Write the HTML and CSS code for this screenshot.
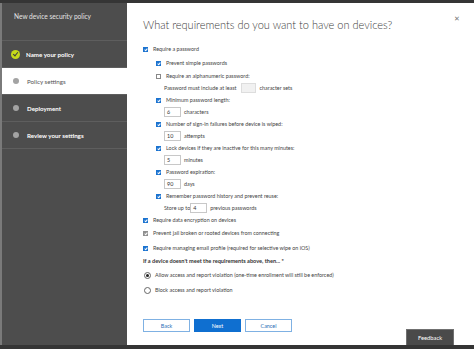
FILE: index.html
```html
<!DOCTYPE html>
<html lang="en">
<head>
    <meta charset="UTF-8" />
    <title>New device security policy</title>
    <link rel="stylesheet" href="styles.css">
</head>
<body>
    <div class="shell">
        <!-- Pasos del asistente -->
        <div class="sidebar">
            <div class="wizard-title">New device security policy</div>
            <div class="step done"><span class="dot"></span>Name your policy</div>
            <div class="step current"><span class="dot"></span>Policy settings</div>
            <div class="step"><span class="dot"></span>Deployment</div>
            <div class="step"><span class="dot"></span>Review your settings</div>
        </div>

        <div class="main">
            <div class="header">
                <h1>What requirements do you want to have on devices?</h1>
                <span class="close">&#x2715;</span>
            </div>

            <div class="form">
                <div class="row"><span class="cb on"></span>Require a password</div>
                <div class="sub">
                    <div class="row"><span class="cb on"></span>Prevent simple passwords</div>
                    <div class="row gap"><span class="cb"></span>Require an alphanumeric password:</div>
                    <div class="row field">Password must include at least <span class="box wide"></span> character sets</div>
                    <div class="row"><span class="cb on"></span>Minimum password length:</div>
                    <div class="row field"><span class="box">6</span> characters</div>
                    <div class="row"><span class="cb on"></span>Number of sign-in failures before device is wiped:</div>
                    <div class="row field"><span class="box">10</span> attempts</div>
                    <div class="row"><span class="cb on"></span>Lock devices if they are inactive for this many minutes:</div>
                    <div class="row field"><span class="box">5</span> minutes</div>
                    <div class="row"><span class="cb on"></span>Password expiration:</div>
                    <div class="row field"><span class="box">90</span> days</div>
                    <div class="row"><span class="cb on"></span>Remember password history and prevent reuse:</div>
                    <div class="row field">Store up to <span class="box">4</span> previous passwords</div>
                </div>
                <div class="row"><span class="cb on"></span>Require data encryption on devices</div>
                <div class="row top"><span class="cb dis"></span>Prevent jail broken or rooted devices from connecting</div>
                <div class="row top2"><span class="cb on"></span>Require managing email profile (required for selective wipe on iOS)</div>
                <div class="row question">If a device doesn't meet the requirements above, then... *</div>
                <div class="row radio-row"><span class="radio on"></span>Allow access and report violation (one-time enrollment will still be enforced)</div>
                <div class="row radio-row"><span class="radio"></span>Block access and report violation</div>
            </div>

            <div class="buttons">
                <button class="btn">Back</button>
                <button class="btn primary">Next</button>
                <button class="btn">Cancel</button>
            </div>

            <button class="feedback">Feedback</button>
        </div>
    </div>
</body>
</html>
```

FILE: styles.css
```css
body {
    margin: 0;
    width: 474px;
    height: 349px;
    overflow: hidden;
    background-color: #353535;
    font-family: 'Lato', 'Open Sans', sans-serif;
    color: #444;
}
.shell {
    display: flex;
    height: 342px;
    margin-top: 3px;
    border-left: 2px solid #7a7a7a;
}
.sidebar {
    width: 125px;
    background-color: #4d4d4d;
    color: #fff;
    font-size: 6.2px;
}
.wizard-title {
    height: 28px;
    padding: 9px 0 0 12px;
    border-bottom: 1px solid #5e5e5e;
    color: #e4e4e4;
    font-size: 6.6px;
}
.step {
    height: 26px;
    display: flex;
    align-items: center;
    padding-left: 10px;
    border-bottom: 1px solid #5e5e5e;
    font-weight: bold;
}
.step .dot {
    width: 6px;
    height: 6px;
    border-radius: 50%;
    background-color: #a3a3a3;
    margin: 0 8px 0 1px;
}
.step.done .dot {
    width: 9px;
    height: 9px;
    margin: 0 6px 0 -1px;
    background-color: #c5d91a;
    position: relative;
}
.step.done .dot::after {
    content: '';
    position: absolute;
    left: 3px;
    top: 1.5px;
    width: 2px;
    height: 4px;
    border-right: 1px solid #3d3d3d;
    border-bottom: 1px solid #3d3d3d;
    transform: rotate(40deg);
}
.step.current {
    background-color: #fff;
    color: #555;
    font-weight: normal;
}
.main {
    flex: 1;
    background-color: #fff;
    position: relative;
    padding-left: 16px;
    display: flex;
    flex-direction: column;
}
.header {
    height: 32px;
    display: flex;
    align-items: center;
    padding-top: 5px;
}
.header h1 {
    margin: 0;
    font-size: 11px;
    font-weight: 300;
    color: #3b3b3b;
}
.close {
    position: absolute;
    top: 11px;
    right: 14px;
    font-size: 7px;
    color: #777;
}
.form {
    font-size: 5.4px;
    display: flex;
    flex-direction: column;
    gap: 2px;
    margin-top: 4px;
}
.row {
    height: 10px;
    display: flex;
    align-items: center;
    white-space: nowrap;
}
.sub {
    display: flex;
    flex-direction: column;
    gap: 2px;
    padding-left: 13px;
    margin-top: 2px;
}
.sub .gap {
    margin-top: 1px;
}
.sub .field {
    padding-left: 8px;
}
.top {
    margin-top: 1px;
}
.top2 {
    margin-top: 3px;
}
.cb {
    width: 5px;
    height: 5px;
    border: 1px solid #888;
    box-sizing: border-box;
    margin-right: 5px;
    position: relative;
    flex-shrink: 0;
}
.cb.on {
    background-color: #1b73d0;
    border-color: #1b73d0;
}
.cb.dis {
    background-color: #8f8f8f;
    border-color: #8f8f8f;
}
.cb.on::after,
.cb.dis::after {
    content: '';
    position: absolute;
    left: 1px;
    top: 0;
    width: 1px;
    height: 2px;
    border-right: 1px solid #fff;
    border-bottom: 1px solid #fff;
    transform: rotate(40deg);
}
.box {
    width: 17px;
    height: 10px;
    box-sizing: border-box;
    border: 1px solid #c8c8c8;
    padding-left: 2px;
    line-height: 8px;
    margin-right: 3px;
    color: #333;
}
.box.wide {
    width: 15px;
    margin: 0 4px;
    background-color: #f1f1f1;
    border-color: #ddd;
}
.field .box:not(.wide):not(:first-child) {
    margin-left: 3px;
}
.question {
    font-weight: bold;
    font-size: 5.6px;
    color: #333;
}
.radio-row {
    margin-top: 3px;
    padding-left: 1px;
}
.radio {
    width: 7px;
    height: 7px;
    box-sizing: border-box;
    border: 1px solid #666;
    border-radius: 50%;
    margin-right: 4px;
    position: relative;
}
.radio.on::after {
    content: '';
    position: absolute;
    left: 1px;
    top: 1px;
    width: 3px;
    height: 3px;
    border-radius: 50%;
    background-color: #222;
}
.buttons {
    display: flex;
    gap: 4px;
    margin-top: 24px;
}
.btn {
    width: 47px;
    height: 13px;
    padding: 0;
    border: 1px solid #7fb1e3;
    background-color: #fff;
    color: #2b6fb6;
    font-family: inherit;
    font-size: 5.4px;
}
.btn.primary {
    background-color: #0f6fd0;
    border-color: #0f6fd0;
    color: #fff;
}
.feedback {
    position: absolute;
    right: 20px;
    bottom: 0;
    width: 48px;
    height: 16px;
    padding: 0;
    background-color: #4a4a4a;
    border: 1px solid #707070;
    border-bottom: none;
    color: #fff;
    font-family: inherit;
    font-size: 5.8px;
}
```
